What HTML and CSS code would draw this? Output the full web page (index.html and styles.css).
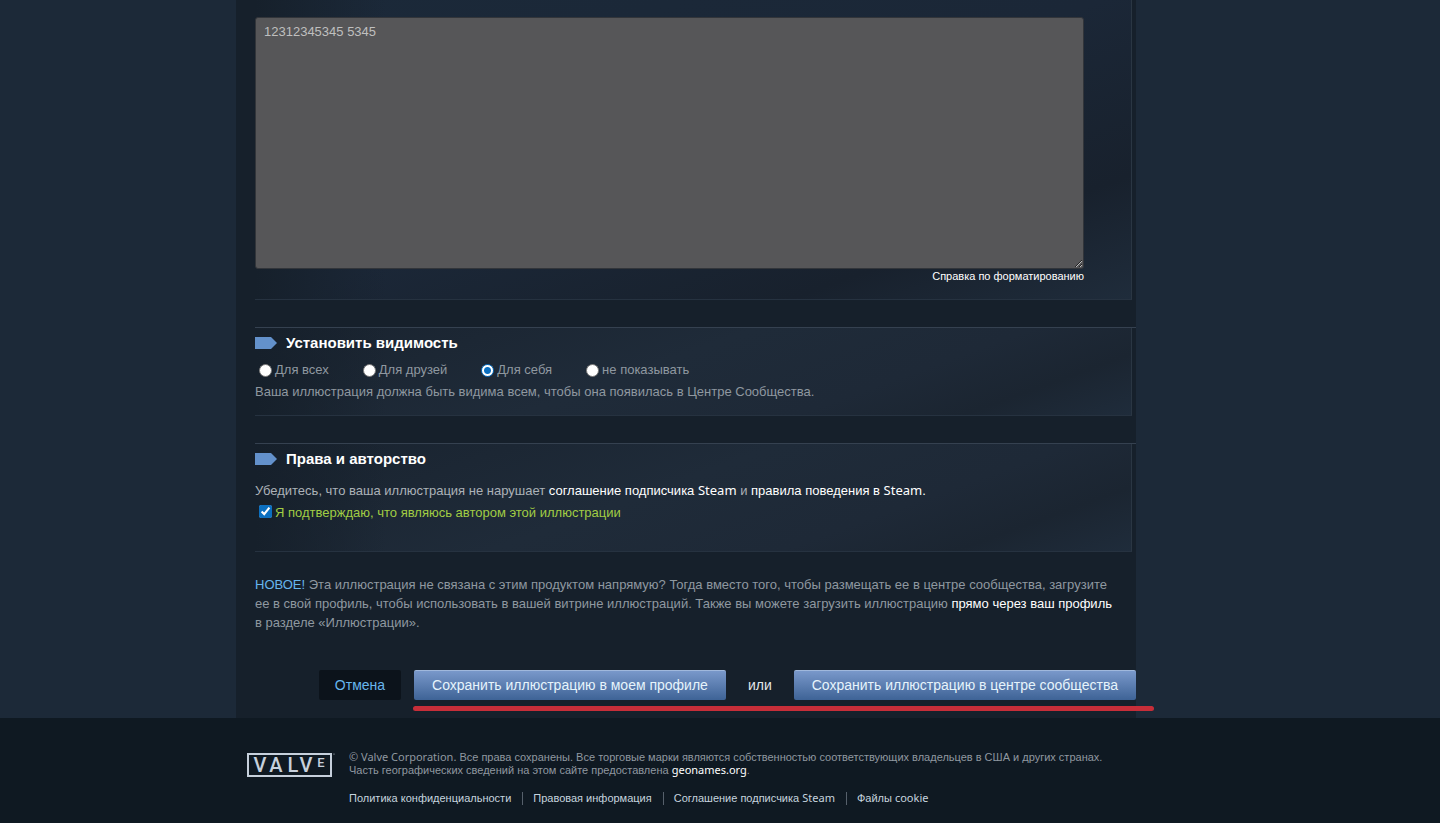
FILE: index.html
```
<!DOCTYPE html>
<html lang="ru">
<head>
<meta charset="utf-8">
<meta name="viewport" content="width=device-width, initial-scale=1">
<title>Загрузка иллюстрации</title>
<link rel="stylesheet" href="styles.css">
</head>
<body>
<main class="page">
  <form class="column">
    <section class="panel panel-description">
      <div class="description">
        <textarea class="description-input" aria-label="Описание">12312345345 5345</textarea>
        <a class="format-help" href="#">Справка по форматированию</a>
      </div>
    </section>

    <section class="group">
      <div class="panel">
        <h2 class="panel-title"><svg class="tag" viewBox="0 0 22 12" aria-hidden="true"><path d="M0 0h16l6 6-6 6H0z"/></svg>Установить видимость</h2>
        <div class="options">
          <label class="option"><input class="radio" type="radio" name="visibility">Для всех</label>
          <label class="option"><input class="radio" type="radio" name="visibility">Для друзей</label>
          <label class="option"><input class="radio" type="radio" name="visibility" checked>Для себя</label>
          <label class="option"><input class="radio" type="radio" name="visibility">не показывать</label>
        </div>
        <p class="hint">Ваша иллюстрация должна быть видима всем, чтобы она появилась в Центре Сообщества.</p>
      </div>
    </section>

    <section class="group">
      <div class="panel panel-rights">
        <h2 class="panel-title"><svg class="tag" viewBox="0 0 22 12" aria-hidden="true"><path d="M0 0h16l6 6-6 6H0z"/></svg>Права и авторство</h2>
        <p class="rights-text">Убедитесь, что ваша иллюстрация не нарушает <a href="#">соглашение подписчика <span class="latin">Steam</span></a> и <a href="#">правила поведения в <span class="latin">Steam</span>.</a></p>
        <label class="agree"><input class="check" type="checkbox" checked>Я подтверждаю, что являюсь автором этой иллюстрации</label>
      </div>
    </section>

    <p class="notice"><span class="new">НОВОЕ!</span> Эта иллюстрация не связана с этим продуктом напрямую? Тогда вместо того, чтобы размещать ее в центре сообщества, загрузите ее в свой профиль, чтобы использовать в вашей витрине иллюстраций. Также вы можете загрузить иллюстрацию <a href="#">прямо через ваш профиль</a> в разделе «Иллюстрации».</p>

    <div class="actions">
      <button class="button button-cancel" type="button">Отмена</button>
      <div class="save">
        <button class="button button-save" type="button">Сохранить иллюстрацию в моем профиле</button>
        <span class="or">или</span>
        <button class="button button-save" type="button">Сохранить иллюстрацию в центре сообщества</button>
        <span class="underline"></span>
      </div>
    </div>
  </form>
</main>

<footer class="footer">
  <div class="footer-inner">
    <svg class="logo" viewBox="0 0 88 27" role="img" aria-label="Valve">
      <rect x="1" y="3" width="83" height="22" fill="none" stroke="#c6d0dc" stroke-width="2"/>
      <g class="logo-letters">
        <text x="13" y="21">V</text><text x="29" y="21">A</text><text x="46" y="21">L</text><text x="59" y="21">V</text><text class="logo-small" x="74" y="16">E</text>
      </g>
      <circle cx="87" cy="3" r="0.6" fill="#c6d0dc"/>
    </svg>
    <div class="legal">
      <p class="copyright"><span class="latin">© Valve Corporation.</span> Все права сохранены. Все торговые марки являются собственностью соответствующих владельцев в США и других странах.<br>Часть географических сведений на этом сайте предоставлена <a class="latin" href="#">geonames.org</a>.</p>
      <nav class="links">
        <a href="#">Политика конфиденциальности</a>
        <a href="#">Правовая информация</a>
        <a href="#">Соглашение подписчика <span class="latin">Steam</span></a>
        <a href="#">Файлы <span class="latin">cookie</span></a>
      </nav>
    </div>
  </div>
</footer>
</body>
</html>
```
FILE: styles.css
```
* {
  box-sizing: border-box;
}

body {
  margin: 0;
  min-height: 100vh;
  display: flex;
  flex-direction: column;
  background: #0f1922;
  color: #8f98a0;
  font-family: "Liberation Sans", Arial, sans-serif;
  font-size: 13px;
  line-height: 19px;
}

p,
h2 {
  margin: 0;
}

a {
  color: #fff;
  text-decoration: none;
}

.latin {
  font-family: "Noto Sans", sans-serif;
  line-height: 1;
}

.page {
  padding: 0 68px 0 0;
  background: #1c2938;
}

.column {
  max-width: 900px;
  margin: 0 auto;
  padding: 0 0 18px 19px;
  background: #16202b;
}

.panel {
  margin-right: 4px;
  border-right: 1px solid #2a3643;
  border-bottom: 1px solid #263240;
  background:
    linear-gradient(90deg, #16202b, #16202b00 15%),
    linear-gradient(160deg, #19232f 0%, #1f2b39 45%, #1e2937 70%, #1b2531 85%, #1f2c3b 100%);
}

.panel-description {
  padding: 17px 47px 16px 0;
  background:
    linear-gradient(90deg, #16202b, #16202b00 15%),
    linear-gradient(160deg, #1b2939 0%, #1b2737 50%, #18212d 80%, #1f2c3b 100%);
}

.description {
  display: flex;
  flex-direction: column;
}

.description-input {
  height: 252px;
  padding: 5px 8px;
  border: 1px solid #32353a;
  border-radius: 3px;
  background: #565658;
  color: #bfbfbf;
  font: inherit;
  line-height: 18px;
  resize: vertical;
}

.format-help {
  align-self: flex-end;
  font-size: 11px;
  line-height: 14px;
}

.group {
  margin-top: 27px;
  border-top: 1px solid #354150;
}

.group .panel {
  padding: 5px 0 14px;
}

.group .panel-rights {
  padding-bottom: 29px;
}

.panel-title {
  display: flex;
  align-items: center;
  gap: 9px;
  padding-bottom: 1px;
  color: #fff;
  font-size: 15px;
  line-height: 20px;
}

.tag {
  width: 22px;
  height: 12px;
  fill: #6391cb;
}

.options {
  display: flex;
  gap: 34px;
  padding: 6px 0 3px 4px;
}

.option {
  display: flex;
  align-items: center;
  gap: 3px;
}

.radio {
  width: 13px;
  height: 13px;
  margin: 2px 0 0;
  appearance: none;
  border: 1px solid #777;
  border-radius: 50%;
  background: #fff;
}

.radio:checked {
  border-color: #0b6fc0;
  background: radial-gradient(circle, #0b6fc0 3px, #fff 4px);
}

.rights-text {
  padding-top: 11px;
  color: #acb2b8;
}

.agree {
  display: flex;
  align-items: center;
  gap: 3px;
  padding: 3px 0 0 4px;
  color: #a1cd44;
}

.check {
  width: 13px;
  height: 13px;
  margin: 0 0 2px;
  accent-color: #0b6fc0;
}

.notice {
  padding: 23px 18px 0 0;
}

.new {
  color: #67b6ee;
}

.actions {
  display: flex;
  justify-content: flex-end;
  gap: 13px;
  padding-top: 38px;
}

.save {
  position: relative;
  display: flex;
  align-items: center;
  gap: 22px;
}

.button {
  height: 30px;
  padding: 0 16px;
  border: 0;
  border-radius: 2px;
  font: inherit;
  font-size: 14px;
}

.button-cancel {
  background: #0c131b;
  color: #67b6ee;
}

.button-save {
  padding: 0 18px;
  border-top: 1px solid #a0b8dc;
  background: linear-gradient(#7998ca, #3e6396);
  color: #e6f4fc;
}

.or {
  color: #e4e8ec;
  font-size: 14px;
}

.underline {
  position: absolute;
  right: -18px;
  bottom: -11px;
  left: -1px;
  height: 5px;
  border-radius: 3px;
  background: #c72e39;
}

.footer {
  flex: 1;
  padding: 33px 68px 16px 0;
  font-size: 11px;
  line-height: 13px;
}

.footer-inner {
  display: flex;
  gap: 14px;
  max-width: 900px;
  margin: 0 auto;
  padding-left: 11px;
}

.logo {
  flex: none;
  width: 88px;
  height: 27px;
}

.logo-letters {
  fill: #c6d0dc;
  font-family: Roboto, sans-serif;
  font-size: 20px;
  font-weight: 500;
  text-anchor: middle;
}

.logo-small {
  font-size: 13px;
}

.links {
  display: flex;
  padding-top: 15px;
}

.links a {
  color: #c6d4df;
}

.links a + a {
  margin-left: 11px;
  padding-left: 10px;
  border-left: 1px solid #56606b;
}
```
